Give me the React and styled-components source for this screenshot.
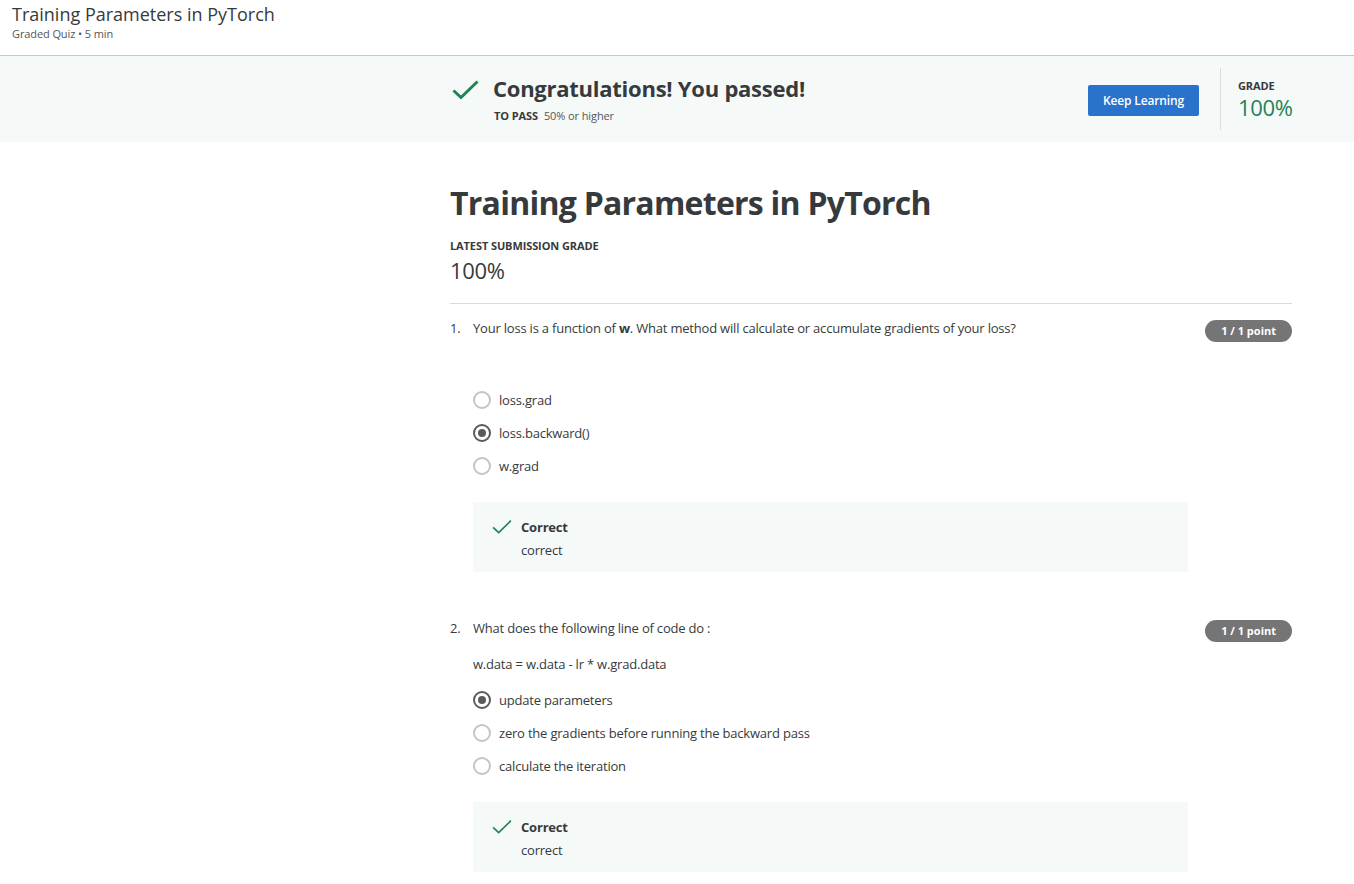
import React from 'react';
import styled, { createGlobalStyle } from 'styled-components';

const GlobalStyle = createGlobalStyle`
  body {
    margin: 0;
    font-family: "Open Sans", "Liberation Sans", sans-serif;
    color: #373a3c;
    background: #fff;
  }
`;

const Header = styled.header`
  height: 56px;
  border-bottom: 1px solid #c8c8c8;
  padding: 2px 12px 0;
  box-sizing: border-box;
`;

const HeaderTitle = styled.div`
  font-size: 18px;
  line-height: 24px;
  color: #373a3c;
`;

const HeaderSub = styled.div`
  font-size: 11px;
  line-height: 16px;
  color: #555;
  letter-spacing: -0.1px;
`;

const Banner = styled.section`
  background: #f5f9f8;
  height: 86px;
  display: flex;
  align-items: center;
`;

const Column = styled.div`
  margin-left: 450px;
  width: 842px;
`;

const BannerInner = styled(Column)`
  display: flex;
  align-items: center;
`;

const PassGroup = styled.div`
  display: flex;
  align-items: flex-start;
  flex: 1;
`;

const BigCheck = styled.svg`
  width: 27px;
  height: 20px;
  margin: 6px 14px 0 2px;
  flex-shrink: 0;
`;

const PassTitle = styled.div`
  font-size: 22px;
  line-height: 28px;
  font-weight: 700;
  letter-spacing: -0.25px;
  color: #373a3c;
`;

const PassSub = styled.div`
  font-size: 11px;
  line-height: 16px;
  margin-top: 6px;
  margin-left: 1px;
  color: #555;
  letter-spacing: -0.1px;

  b {
    color: #373a3c;
    margin-right: 6px;
  }
`;

const KeepButton = styled.button`
  width: 111px;
  height: 31px;
  background: #2a73cc;
  color: #fff;
  border: none;
  border-radius: 2px;
  font-family: inherit;
  font-size: 12px;
  font-weight: 600;
  letter-spacing: -0.15px;
  margin-top: 3px;
`;

const Divider = styled.div`
  width: 1px;
  height: 62px;
  background: #dcdcdc;
  margin: 0 17px 0 21px;
`;

const GradeBox = styled.div`
  width: 54px;
`;

const SmallLabel = styled.div`
  font-size: 11px;
  line-height: 16px;
  font-weight: 700;
  letter-spacing: -0.1px;
  color: #373a3c;
`;

const GradeValue = styled.div`
  font-size: 22px;
  line-height: 26px;
  letter-spacing: -0.3px;
  color: ${p => p.$green ? '#1f8354' : '#373a3c'};
  margin-top: ${p => p.$gap || 0}px;
`;

const PageTitle = styled.h1`
  margin: 41px 0 15px;
  font-size: 32px;
  line-height: 40px;
  font-weight: 700;
  letter-spacing: -0.75px;
  color: #373a3c;
`;

const Rule = styled.hr`
  border: none;
  border-top: 1px solid #dadada;
  margin: 20px 0 14px;
`;

const Question = styled.div`
  margin-bottom: 46px;
`;

const QuestionHead = styled.div`
  display: flex;
  align-items: flex-start;
  font-size: 13px;
  line-height: 20px;
  letter-spacing: -0.2px;
`;

const Num = styled.div`
  width: 23px;
  flex-shrink: 0;
`;

const Prompt = styled.div`
  flex: 1;

  p {
    margin: 0 0 16px;
    min-height: 20px;
  }
`;

const Badge = styled.div`
  background: #757575;
  color: #fff;
  font-size: 11px;
  font-weight: 700;
  line-height: 22px;
  height: 22px;
  padding: 0 16px;
  border-radius: 11px;
  margin-top: 2px;
  letter-spacing: 0;
`;

const Body = styled.div`
  margin-left: 23px;
  margin-right: 104px;
`;

const Options = styled.div`
  display: flex;
  flex-direction: column;
  gap: 13px;
  margin-bottom: 26px;
`;

const Option = styled.label`
  display: flex;
  align-items: center;
  font-size: 13px;
  line-height: 20px;
  height: 20px;
  letter-spacing: -0.2px;
`;

const Radio = styled.span`
  width: 18px;
  height: 18px;
  box-sizing: border-box;
  border-radius: 50%;
  border: 2px solid ${p => p.$on ? '#5b5b5b' : '#c4c4c4'};
  margin-right: 8px;
  display: flex;
  align-items: center;
  justify-content: center;

  &::after {
    content: '';
    width: 8px;
    height: 8px;
    border-radius: 50%;
    background: ${p => p.$on ? '#5b5b5b' : 'transparent'};
  }
`;

const Feedback = styled.div`
  background: #f5f9f8;
  height: 70px;
  box-sizing: border-box;
  padding: 15px 19px 12px;
  display: flex;
  align-items: flex-start;
  font-size: 13px;
  line-height: 20px;
  letter-spacing: -0.2px;
`;

const SmallCheck = styled.svg`
  width: 20px;
  height: 16px;
  margin: 2px 9px 0 0;
  flex-shrink: 0;
`;

const FeedTitle = styled.div`
  font-weight: 700;
  margin-bottom: 3px;
`;

const Check = ({ as: C, stroke }) => (
  <C viewBox="0 0 27 20" fill="none">
    <path d="M1.5 10.5 L9 17.5 L25.5 1.5" stroke="#1f8354" strokeWidth={stroke} />
  </C>
);

const questions = [
  {
    n: 1,
    prompt: [
      <>Your loss is a function of <b>w</b>. What method will calculate or accumulate gradients of your loss?</>,
      '\u00a0',
    ],
    options: ['loss.grad', 'loss.backward()', 'w.grad'],
    picked: 1,
  },
  {
    n: 2,
    prompt: ['What does the following line of code do :', 'w.data = w.data - lr * w.grad.data'],
    options: ['update parameters', 'zero the gradients before running the backward pass', 'calculate the iteration'],
    picked: 0,
  },
];

export default function App() {
  return (
    <>
      <GlobalStyle />
      <Header>
        <HeaderTitle>Training Parameters in PyTorch</HeaderTitle>
        <HeaderSub>Graded Quiz • 5 min</HeaderSub>
      </Header>
      <Banner>
        <BannerInner>
          <PassGroup>
            <Check as={BigCheck} stroke={3} />
            <div>
              <PassTitle>Congratulations! You passed!</PassTitle>
              <PassSub><b>TO PASS</b>50% or higher</PassSub>
            </div>
          </PassGroup>
          <KeepButton>Keep Learning</KeepButton>
          <Divider />
          <GradeBox>
            <SmallLabel>GRADE</SmallLabel>
            <GradeValue $green>100%</GradeValue>
          </GradeBox>
        </BannerInner>
      </Banner>
      <Column>
        <PageTitle>Training Parameters in PyTorch</PageTitle>
        <SmallLabel>LATEST SUBMISSION GRADE</SmallLabel>
        <GradeValue $gap={3}>100%</GradeValue>
        <Rule />
        {questions.map(q => (
          <Question key={q.n}>
            <QuestionHead>
              <Num>{q.n}.</Num>
              <Prompt>
                {q.prompt.map((p, i) => <p key={i}>{p}</p>)}
              </Prompt>
              <Badge>1 / 1 point</Badge>
            </QuestionHead>
            <Body>
              <Options>
                {q.options.map((o, i) => (
                  <Option key={o}>
                    <Radio $on={i === q.picked} />
                    {o}
                  </Option>
                ))}
              </Options>
              <Feedback>
                <Check as={SmallCheck} stroke={2.2} />
                <div>
                  <FeedTitle>Correct</FeedTitle>
                  <div>correct</div>
                </div>
              </Feedback>
            </Body>
          </Question>
        ))}
      </Column>
    </>
  );
}
